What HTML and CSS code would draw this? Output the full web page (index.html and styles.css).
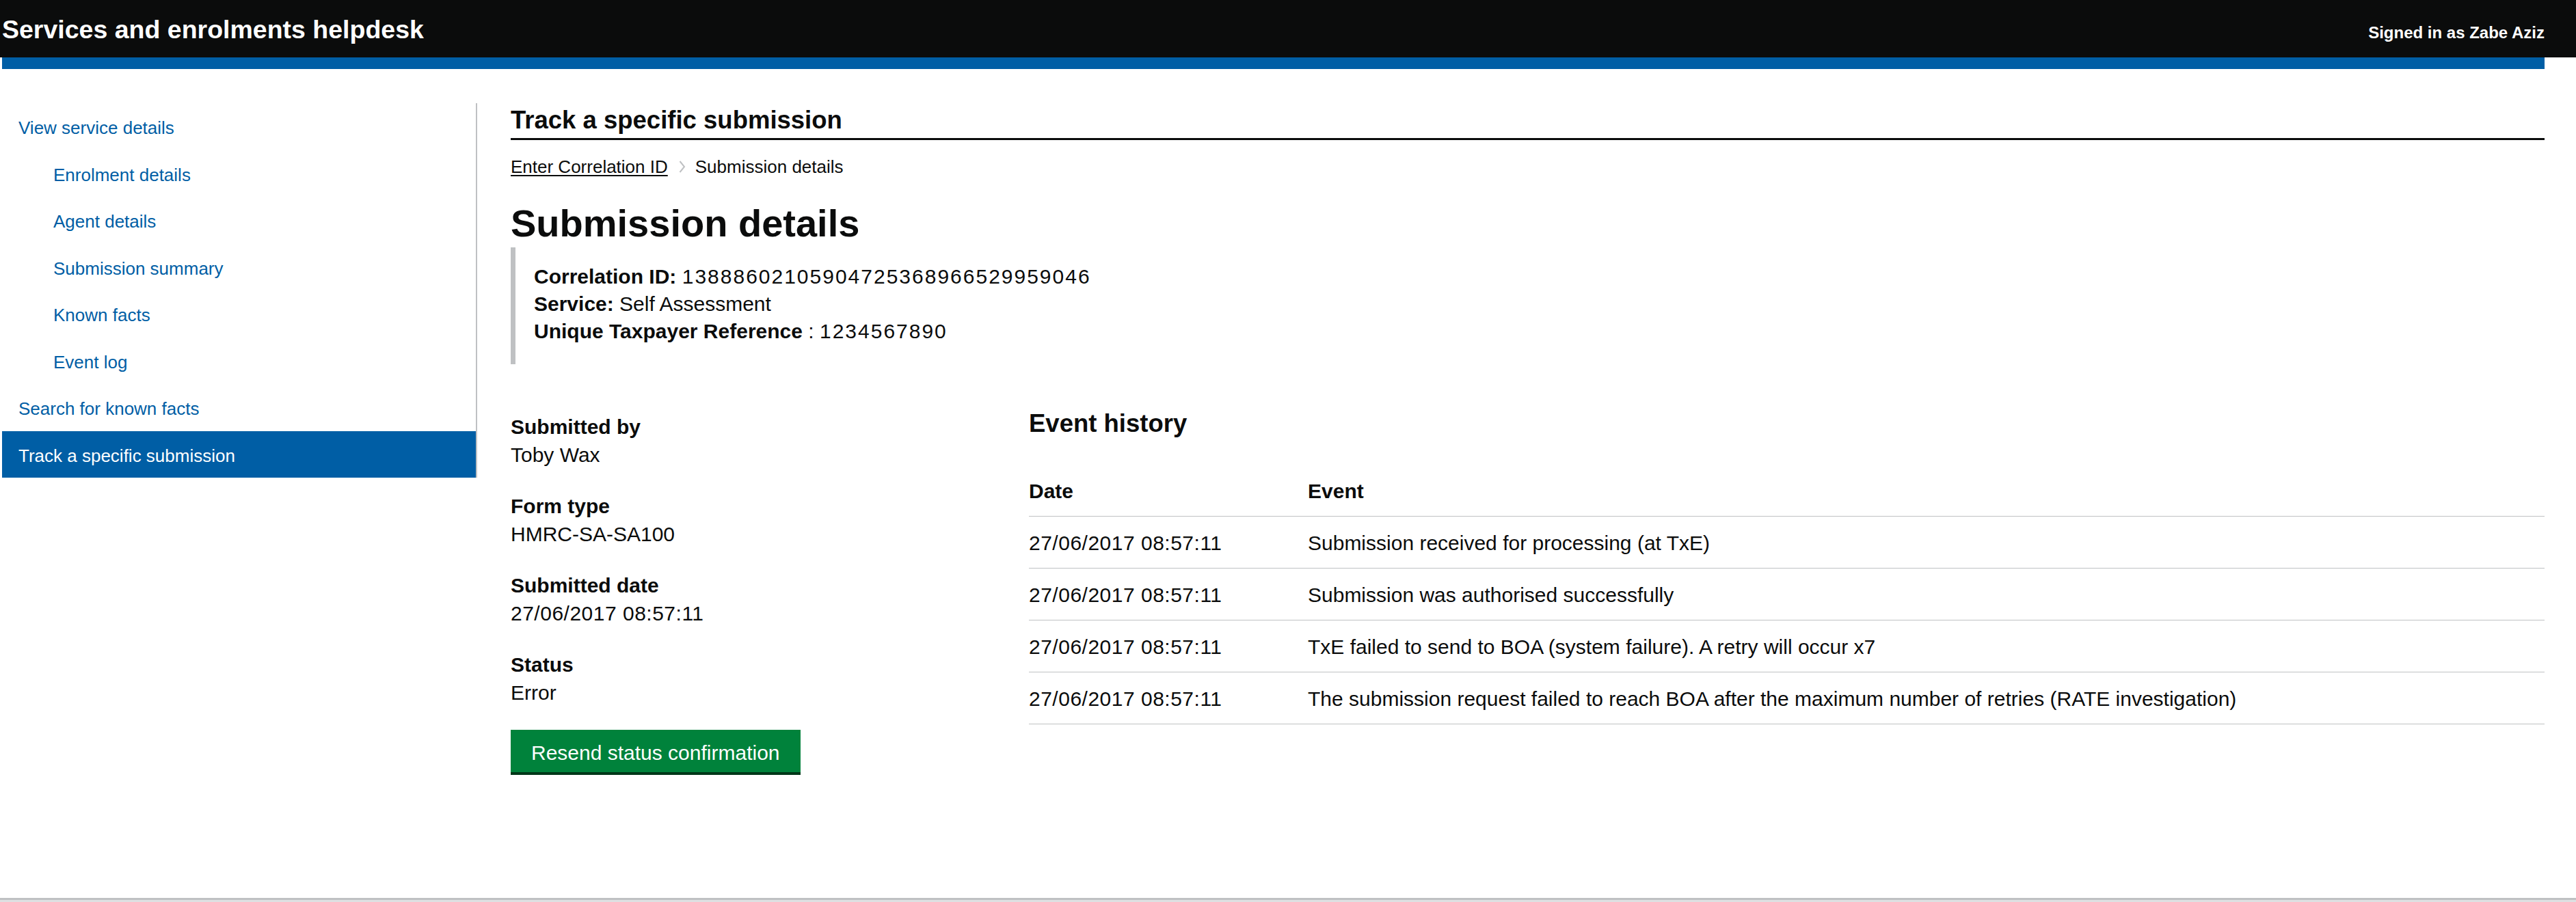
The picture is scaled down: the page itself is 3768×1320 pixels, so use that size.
FILE: index.html
```html
<!DOCTYPE html>
<html lang="en">
<head>
<meta charset="utf-8">
<title>Submission details - Services and enrolments helpdesk</title>
<link rel="stylesheet" href="styles.css">
</head>
<body>
<header class="site-header">
  <div class="site-header__inner">
    <span class="site-header__title">Services and enrolments helpdesk</span>
    <span class="site-header__user">Signed in as Zabe Aziz</span>
  </div>
</header>
<div class="header-rule"></div>

<div class="page">
  <nav class="side-nav" aria-label="Helpdesk navigation">
    <ul class="side-nav__list">
      <li><a class="side-nav__link" href="#">View service details</a></li>
      <li><a class="side-nav__link side-nav__link--sub" href="#">Enrolment details</a></li>
      <li><a class="side-nav__link side-nav__link--sub" href="#">Agent details</a></li>
      <li><a class="side-nav__link side-nav__link--sub" href="#">Submission summary</a></li>
      <li><a class="side-nav__link side-nav__link--sub" href="#">Known facts</a></li>
      <li><a class="side-nav__link side-nav__link--sub" href="#">Event log</a></li>
      <li><a class="side-nav__link" href="#">Search for known facts</a></li>
      <li><a class="side-nav__link side-nav__link--active" href="#">Track a specific submission</a></li>
    </ul>
  </nav>

  <main class="content">
    <h2 class="section-title">Track a specific submission</h2>

    <ol class="breadcrumbs">
      <li class="breadcrumbs__item"><a class="breadcrumbs__link" href="#">Enter Correlation ID</a></li>
      <li class="breadcrumbs__item">
        <svg class="breadcrumbs__chevron" width="10" height="20" viewBox="0 0 10 20" aria-hidden="true"><path d="M1.5 2 L8 10 L1.5 18" fill="none" stroke="#bfc1c3" stroke-width="2"/></svg>
        <span>Submission details</span>
      </li>
    </ol>

    <h1 class="page-title">Submission details</h1>

    <div class="inset">
      <p><strong>Correlation ID:</strong> <span class="num">13888602105904725368966529959046</span></p>
      <p><strong>Service:</strong> Self Assessment</p>
      <p><strong>Unique Taxpayer Reference</strong> : <span class="num">1234567890</span></p>
    </div>

    <div class="details-grid">
      <div class="details-grid__side">
        <dl class="summary">
          <dt>Submitted by</dt>
          <dd>Toby Wax</dd>
          <dt>Form type</dt>
          <dd>HMRC-SA-SA100</dd>
          <dt>Submitted date</dt>
          <dd class="date">27/06/2017 08:57:11</dd>
          <dt>Status</dt>
          <dd>Error</dd>
        </dl>
        <button class="button" type="button">Resend status confirmation</button>
      </div>

      <div class="details-grid__main">
        <h2 class="heading-medium">Event history</h2>
        <table class="events">
          <thead>
            <tr><th class="events__date">Date</th><th>Event</th></tr>
          </thead>
          <tbody>
            <tr><td class="date">27/06/2017 08:57:11</td><td>Submission received for processing (at TxE)</td></tr>
            <tr><td class="date">27/06/2017 08:57:11</td><td>Submission was authorised successfully</td></tr>
            <tr><td class="date">27/06/2017 08:57:11</td><td>TxE failed to send to BOA (system failure). A retry will occur x7</td></tr>
            <tr><td class="date">27/06/2017 08:57:11</td><td>The submission request failed to reach BOA after the maximum number of retries (RATE investigation)</td></tr>
          </tbody>
        </table>
      </div>
    </div>
  </main>
</div>

<footer class="site-footer"></footer>
</body>
</html>
```

FILE: styles.css
```css
* { box-sizing: border-box; }

html, body {
  margin: 0;
  padding: 0;
}

body {
  font-family: "Liberation Sans", Arial, sans-serif;
  color: #0b0c0c;
  background: #ffffff;
}

/* Header */
.site-header {
  background: #0b0c0c;
  height: 84px;
}

.site-header__inner {
  margin: 0 46px 0 3px;
  height: 84px;
  padding-top: 2px;
  display: flex;
  justify-content: space-between;
  align-items: baseline;
  color: #ffffff;
  font-weight: 700;
}

.site-header__title {
  font-size: 37.5px;
  line-height: 82px;
}

.site-header__user {
  font-size: 24px;
}

.header-rule {
  height: 17px;
  margin: 0 46px 0 3px;
  background: #005ea5;
}

/* Page layout */
.page {
  display: grid;
  grid-template-columns: 695px 1fr;
  column-gap: 49px;
  align-items: start;
  margin: 0 46px 0 3px;
  padding: 50px 0 184px;
}

/* Side navigation */
.side-nav {
  border-right: 2px solid #bfc1c3;
}

.side-nav__list {
  list-style: none;
  margin: 0;
  padding: 0;
}

.side-nav__link {
  display: block;
  padding: 22px 0 17.5px 24px;
  font-size: 26px;
  line-height: 29px;
  color: #005ea5;
  text-decoration: none;
}

.side-nav__link--sub {
  padding-left: 75px;
}

.side-nav__link--active {
  background: #005ea5;
  color: #ffffff;
}

/* Content */
.content {
  min-width: 0;
}

.section-title {
  margin: 0;
  padding: 5px 0 6px;
  font-size: 36.5px;
  line-height: 40px;
  font-weight: 700;
  border-bottom: 3px solid #0b0c0c;
}

.breadcrumbs {
  list-style: none;
  margin: 23px 0 0;
  padding: 0;
  display: flex;
  align-items: center;
  font-size: 26px;
  line-height: 32px;
}

.breadcrumbs__item {
  display: flex;
  align-items: center;
}

.breadcrumbs__link {
  color: #0b0c0c;
  text-decoration: underline;
  text-decoration-thickness: 2px;
  text-underline-offset: 3px;
}

.breadcrumbs__chevron {
  display: block;
  margin: 0 14px 0 16px;
}

.page-title {
  margin: 37px 0 0;
  font-size: 56px;
  line-height: 60px;
  font-weight: 700;
}

.inset {
  margin-top: 5px;
  padding: 23px 0 28px 27px;
  border-left: 7px solid #bfc1c3;
  font-size: 30px;
  line-height: 40px;
}

.inset p {
  margin: 0;
}

.num {
  letter-spacing: 2px;
}

.date {
  letter-spacing: 0.5px;
}

/* Details grid */
.details-grid {
  display: grid;
  grid-template-columns: 713px 1fr;
  column-gap: 45px;
  margin-top: 67px;
}

.details-grid__main {
  min-width: 0;
}

.summary {
  margin: 0;
  padding-top: 4px;
  font-size: 30px;
  line-height: 41px;
}

.summary dt {
  font-weight: 700;
}

.summary dd {
  margin: 0 0 34px;
}

.button {
  display: inline-block;
  margin: 0;
  padding: 16px 30px 10px;
  border: 0;
  border-radius: 0;
  font-family: inherit;
  font-size: 30px;
  line-height: 36px;
  color: #ffffff;
  background: #00823b;
  box-shadow: 0 4px 0 #003618;
  cursor: pointer;
}

.heading-medium {
  margin: 0;
  font-size: 36.5px;
  line-height: 40px;
  font-weight: 700;
}

.events {
  width: 100%;
  margin-top: 40px;
  border-collapse: collapse;
  font-size: 30px;
  line-height: 41px;
}

.events th,
.events td {
  text-align: left;
  vertical-align: top;
  padding: 18px 0 16px;
  border-bottom: 1px solid #bfc1c3;
}

.events th {
  font-weight: 700;
}

.events__date {
  width: 408px;
}

/* Footer */
.site-footer {
  border-top: 3px solid #bfc1c3;
  background: #dee0e2;
  height: 120px;
}
```
